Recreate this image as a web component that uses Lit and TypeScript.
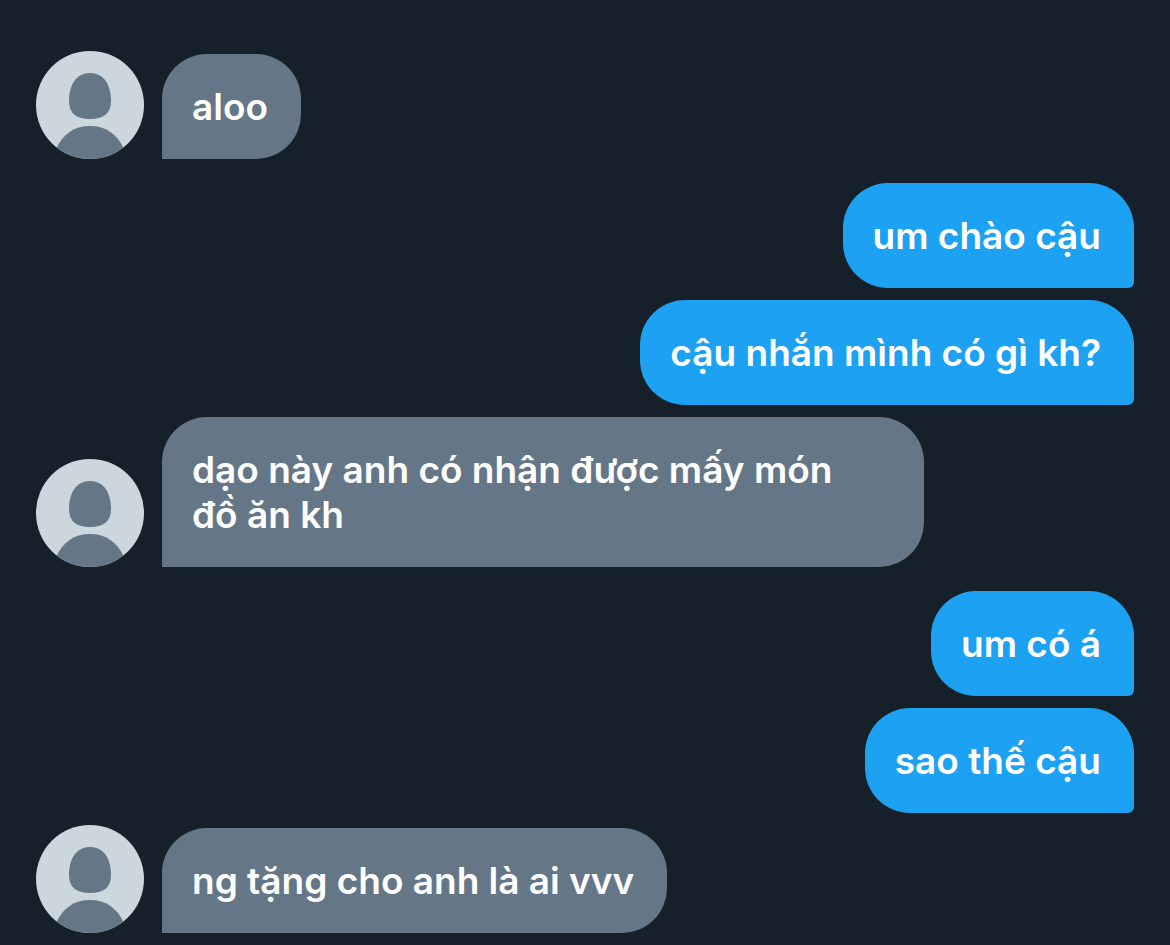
import { LitElement, html, css } from "lit";
import { customElement, property } from "lit/decorators.js";

interface Message {
  text: string;
  mine: boolean;
}

const MESSAGES: Message[] = [
  { text: "aloo", mine: false },
  { text: "um chào cậu", mine: true },
  { text: "cậu nhắn mình có gì kh?", mine: true },
  { text: "dạo này anh có nhận được mấy món đồ\u00a0ăn kh", mine: false },
  { text: "um có á", mine: true },
  { text: "sao thế cậu", mine: true },
  { text: "ng tặng cho anh là ai vvv", mine: false },
];

@customElement("user-avatar")
class UserAvatar extends LitElement {
  static styles = css`
    :host {
      display: block;
      flex: none;
      width: 108px;
      height: 108px;
    }
    .picture {
      display: block;
      width: 100%;
      height: 100%;
      border-radius: 50%;
    }
  `;

  render() {
    return html`<svg class="picture" viewBox="0 0 108 108" aria-hidden="true">
      <rect width="108" height="108" fill="#ccd6dd" />
      <path d="M54 22C68 22 75 34 75 50C75 63 67 68 54 68C41 68 33 63 33 50C33 34 40 22 54 22Z" fill="#657786" />
      <path d="M20 98C27 83 38 75 54 75C70 75 81 83 88 98V108H20Z" fill="#657786" />
    </svg>`;
  }
}

@customElement("chat-message")
class ChatMessage extends LitElement {
  @property() text = "";
  @property({ type: Boolean }) mine = false;

  static styles = css`
    :host {
      display: block;
    }
    .row {
      display: flex;
      align-items: flex-end;
      gap: 18px;
    }
    .row.mine {
      justify-content: flex-end;
    }
    .bubble {
      box-sizing: border-box;
      max-width: 762px;
      margin: 0;
      padding: 30px 33px 30px 30px;
      border-radius: 45px 45px 45px 0;
      background: #657786;
      color: #fff;
      font: 600 37px/45px Inter, "Noto Sans", sans-serif;
    }
    .mine .bubble {
      border-radius: 45px 45px 6px 45px;
      background: #1da1f2;
    }
  `;

  render() {
    return html`<div class="row ${this.mine ? "mine" : ""}">
      ${this.mine ? "" : html`<user-avatar></user-avatar>`}
      <p class="bubble">${this.text}</p>
    </div>`;
  }
}

@customElement("app-root")
class AppRoot extends LitElement {
  static styles = css`
    :host {
      display: block;
      box-sizing: border-box;
      min-height: 100vh;
      padding: 51px 36px 12px;
      background: #16202a;
    }
    .thread {
      display: flex;
      flex-direction: column;
    }
    .after-theirs {
      margin-top: 24px;
    }
    .after-mine {
      margin-top: 12px;
    }
  `;

  render() {
    return html`<main class="thread">
      ${MESSAGES.map((message, index) => {
        const previous = MESSAGES[index - 1];
        const spacing = !previous ? "" : previous.mine ? "after-mine" : "after-theirs";
        return html`<chat-message class=${spacing} .text=${message.text} .mine=${message.mine}></chat-message>`;
      })}
    </main>`;
  }
}
